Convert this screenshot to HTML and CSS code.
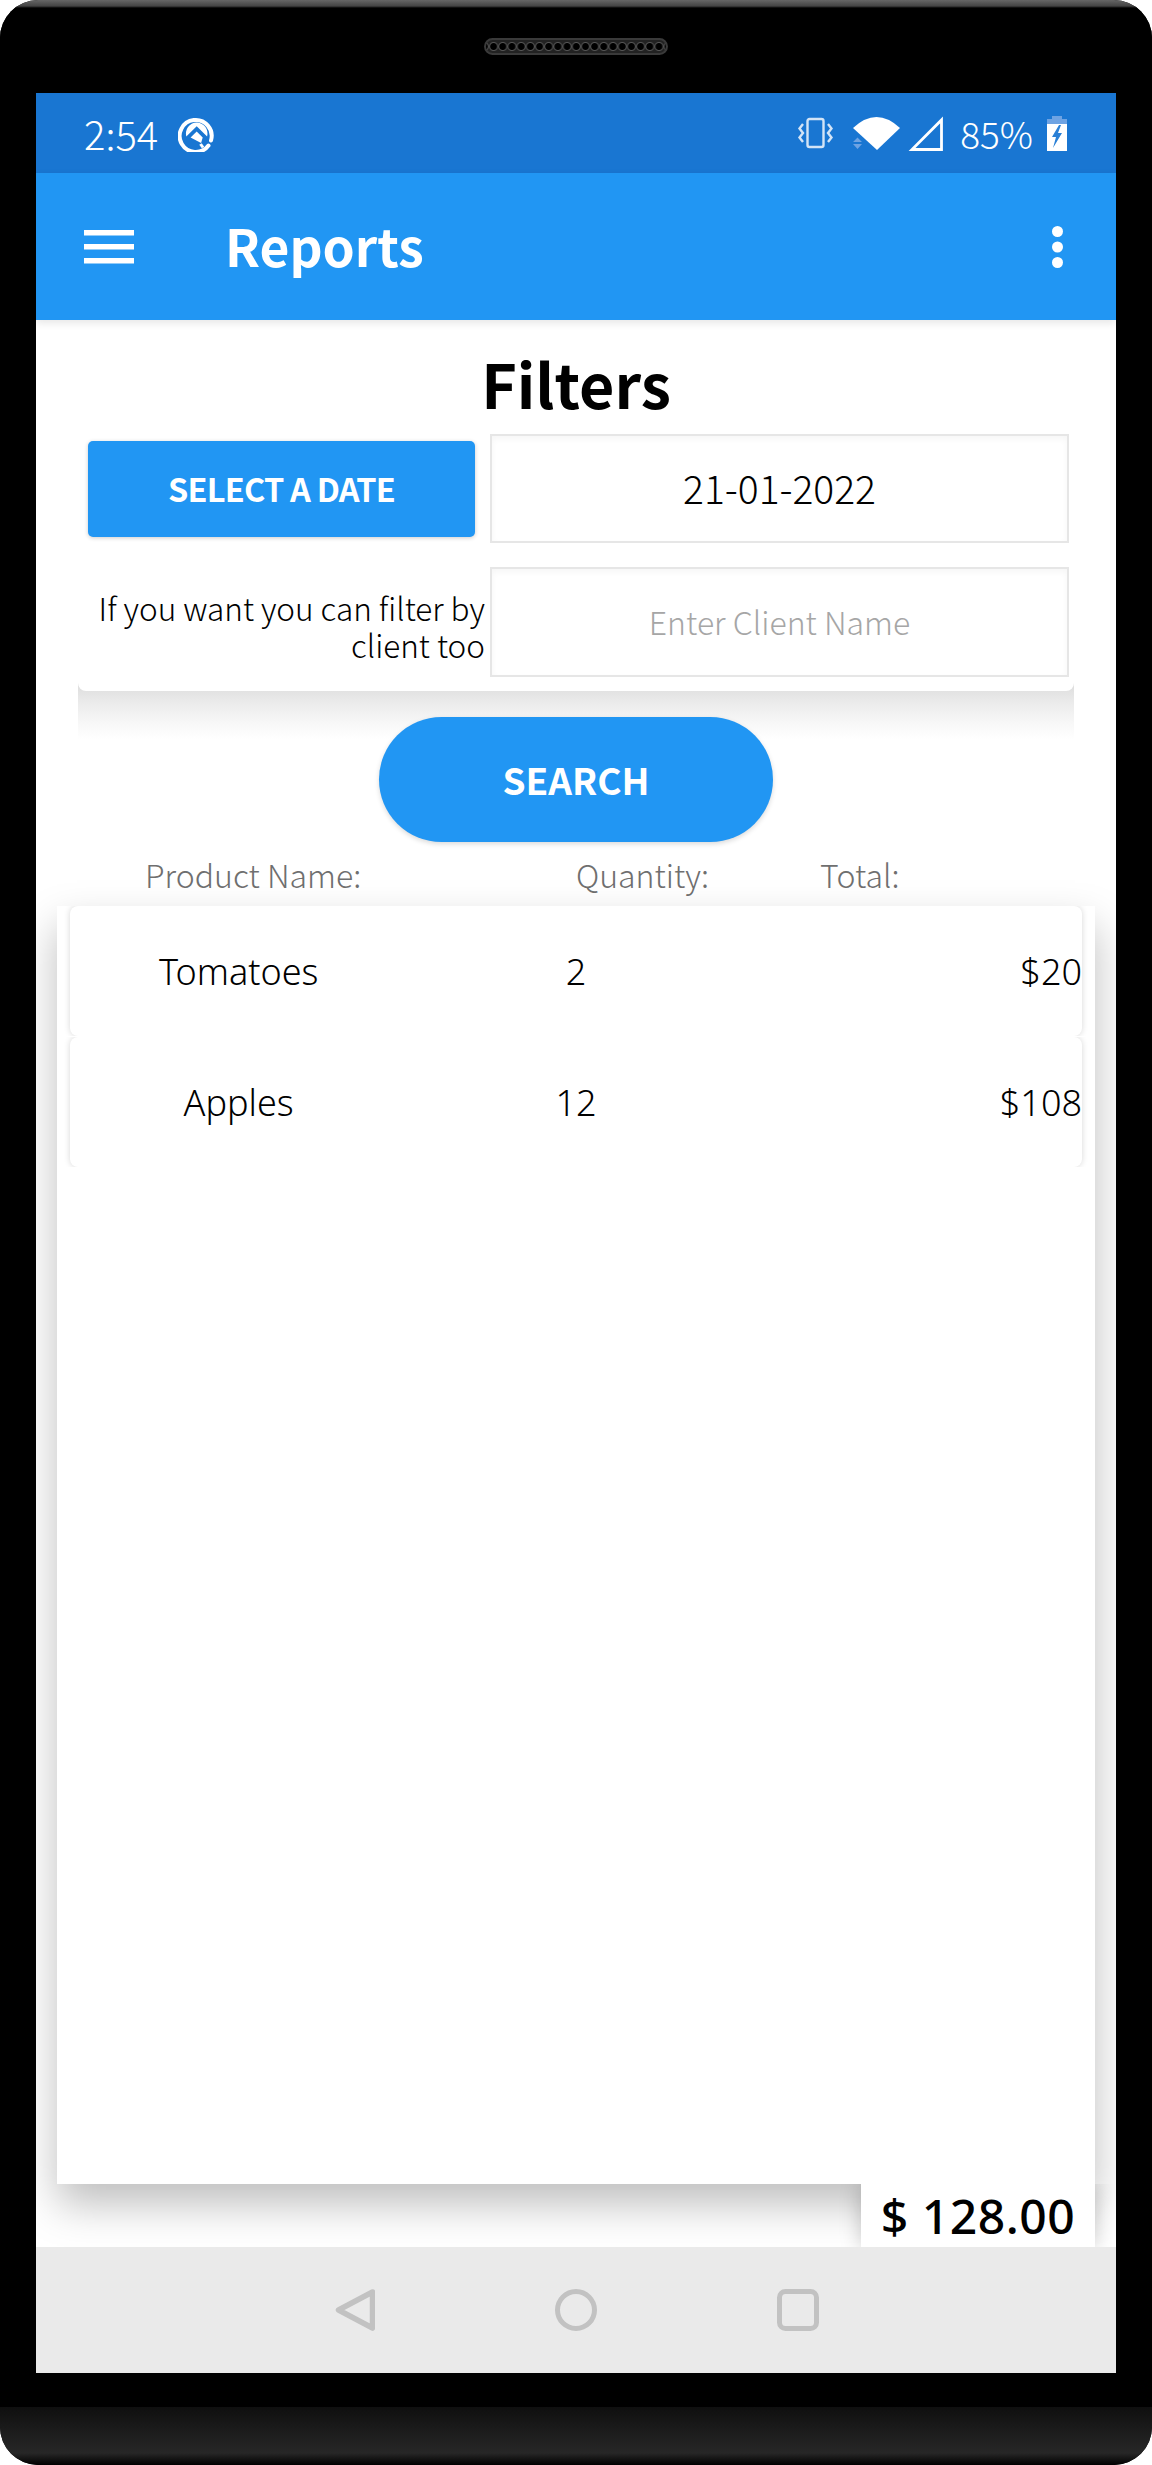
FILE: index.html
```html
<!DOCTYPE html>
<html lang="en">
<head>
    <meta charset="UTF-8">
    <meta name="viewport" content="width=device-width, initial-scale=1.0">
    <title>Reports</title>
    <link rel="stylesheet" href="styles.css">
</head>
<body>
    <div class="phone">
        <div class="bezel-top"><div class="speaker"></div></div>

        <div class="screen">
            <div class="status-bar">
                <span class="time">2:54</span>
                <svg class="q-icon" viewBox="0 0 37 37" width="37" height="37">
                    <path d="M30.5 30.5A16 16 0 1 1 33 25.5" fill="none" stroke="#fff" stroke-width="4" stroke-linecap="round"/>
                    <path d="M18.5 7.5a11 11 0 0 1 10.6 13.9L18.7 11.2 8.3 21.4A11 11 0 0 1 18.5 7.5z" fill="#fff"/>
                    <path d="M18.7 16.5l6 6-1.6 5.5-10.5-5.6z" fill="#fff"/>
                    <path d="M25 32.5l-2.500-3.500" stroke="#fff" stroke-width="3"/>
                </svg>
                <div class="status-right">
                    <svg class="vibrate-icon" viewBox="0 0 36 32" width="36" height="32">
                        <rect x="10.500" y="2" width="16" height="28" rx="2" fill="none" stroke="#d3e4f6" stroke-width="2.400"/>
                        <path d="M6 7L2.500 11.500 6 16 2.500 20.500 6 25" fill="none" stroke="#d3e4f6" stroke-width="2.400"/>
                        <path d="M31 7l3.500 4.500L31 16l3.500 4.500L31 25" fill="none" stroke="#d3e4f6" stroke-width="2.400"/>
                    </svg>
                    <svg class="wifi-icon" viewBox="0 0 47 33" width="47" height="33">
                        <path d="M0 11Q23.500-11 47 11L24 33z" fill="#fff"/>
                        <path d="M4.500 20.500l4.500 4.500H0zM0 27h9l-4.500 5z" fill="#6ea3e3"/>
                    </svg>
                    <svg class="signal-icon" viewBox="0 0 35 35" width="35" height="35">
                        <path d="M33.500 4V33.500H4z" fill="none" stroke="#fff" stroke-width="2.800"/>
                    </svg>
                    <span class="battery-text">85%</span>
                    <svg class="battery-icon" viewBox="0 0 20 35" width="20" height="35">
                        <path d="M5 0h10v3h5v5H0V3h5z" fill="#6ea3e3"/>
                        <path d="M0 8h20v27H0z" fill="#fff"/>
                        <path d="M12 9L5 21h4l-3 11 9-15h-4l3-8z" fill="#2a80d6"/>
                    </svg>
                </div>
            </div>

            <header class="app-bar">
                <svg class="menu-icon" viewBox="0 0 50 34" width="50" height="34">
                    <path d="M0 0h50v5.500H0zM0 14h50v5.500H0zM0 28h50v5.500H0z" fill="#fff"/>
                </svg>
                <h2 class="app-title">Reports</h2>
                <svg class="more-icon" viewBox="0 0 11 42" width="11" height="42">
                    <circle cx="5.500" cy="5.500" r="5.500" fill="#fff"/>
                    <circle cx="5.500" cy="21" r="5.500" fill="#fff"/>
                    <circle cx="5.500" cy="36.500" r="5.500" fill="#fff"/>
                </svg>
            </header>

            <main class="content">
                <section class="filter-card">
                    <h1 class="filter-title">Filters</h1>
                    <div class="filter-grid">
                        <button type="button" class="date-button">SELECT A DATE</button>
                        <div class="filter-box date-value">21-01-2022</div>
                        <label class="filter-hint" for="clientName">If you want you can filter by client too</label>
                        <input class="filter-box client-input" id="clientName" type="text" placeholder="Enter Client Name">
                    </div>
                </section>
                <div class="filter-shade"></div>

                <button type="button" class="search-button">SEARCH</button>

                <div class="table-head">
                    <span>Product Name:</span>
                    <span>Quantity:</span>
                    <span>Total:</span>
                </div>

                <div class="report-list">
                    <div class="report-row">
                        <span class="cell-name">Tomatoes</span>
                        <span class="cell-qty">2</span>
                        <span class="cell-total">$20</span>
                    </div>
                    <div class="report-row">
                        <span class="cell-name">Apples</span>
                        <span class="cell-qty">12</span>
                        <span class="cell-total">$108</span>
                    </div>
                </div>

                <div class="total-wrap">
                    <div class="total-box">$ 128.00</div>
                </div>
            </main>

            <nav class="nav-bar">
                <svg viewBox="0 0 42 42" width="42" height="42">
                    <path d="M39.500 3L5.500 21l34 18z" fill="none" stroke="#c2c2c2" stroke-width="5.500" stroke-linejoin="round"/>
                </svg>
                <svg viewBox="0 0 42 42" width="42" height="42">
                    <circle cx="21" cy="21" r="18.500" fill="none" stroke="#c2c2c2" stroke-width="5"/>
                </svg>
                <svg viewBox="0 0 42 42" width="42" height="42">
                    <rect x="2.500" y="2.500" width="37" height="37" rx="6" fill="none" stroke="#c2c2c2" stroke-width="5"/>
                </svg>
            </nav>
        </div>

        <div class="bezel-bottom"></div>
    </div>
</body>
</html>
```

FILE: styles.css
```css
* {
    box-sizing: border-box;
}
body {
    margin: 0;
    background-color: #fff;
    font-family: "Noto Sans CJK JP", "Noto Sans", sans-serif;
}
.phone {
    width: 1152px;
    height: 2465px;
    display: flex;
    flex-direction: column;
    background-color: #000;
    border-radius: 38px;
    overflow: hidden;
}

/* bezels */
.bezel-top {
    height: 93px;
    flex-shrink: 0;
    padding-top: 38px;
    display: flex;
    justify-content: center;
    background: linear-gradient(#666 0, #444 6px, #000 8px);
}
.speaker {
    width: 184px;
    height: 17px;
    border-radius: 9px;
    border: 2px solid #3a3a3a;
    background-color: #222;
    background-image: radial-gradient(circle at center, #000 0, #000 3px, #555 4px, #222 5px);
    background-size: 9.200px 13px;
    background-position: 3px center;
    background-repeat: repeat-x;
}
.bezel-bottom {
    height: 92px;
    flex-shrink: 0;
    background: linear-gradient(#000 0, #000 34px, #0f0f0f 34px, #272727 80px, #000 92px);
}

/* screen */
.screen {
    flex: 1;
    min-height: 0;
    margin: 0 36px;
    display: flex;
    flex-direction: column;
    background-color: #fff;
    overflow: hidden;
}
.status-bar {
    height: 80px;
    flex-shrink: 0;
    display: flex;
    align-items: center;
    padding: 0 49px 0 48px;
    background-color: #1976d2;
    color: #fff;
}
.time {
    font-size: 40px;
    font-weight: 300;
}
.q-icon {
    margin-left: 20px;
}
.status-right {
    margin-left: auto;
    display: flex;
    align-items: center;
}
.wifi-icon {
    margin-left: 20px;
}
.signal-icon {
    margin-left: 8px;
}
.battery-text {
    margin-left: 17px;
    font-size: 37px;
    font-weight: 300;
}
.battery-icon {
    margin-left: 14px;
}

.app-bar {
    height: 147px;
    flex-shrink: 0;
    display: flex;
    align-items: center;
    padding: 0 53px 0 48px;
    background-color: #2196f3;
    box-shadow: 0 3px 8px rgba(0, 0, 0, 0.1);
    position: relative;
    z-index: 3;
}
.app-title {
    margin: 0 0 5px 91px;
    color: #fff;
    font-size: 51.500px;
    font-weight: 700;
}
.more-icon {
    margin-left: auto;
}

/* filters */
.content {
    flex: 1;
    min-height: 0;
    display: flex;
    flex-direction: column;
}
.filter-card {
    height: 350px;
    flex-shrink: 0;
    margin: 21px 42px 0;
    padding-right: 5px;
    background-color: #fff;
    border-radius: 0 0 8px 8px;
    position: relative;
    z-index: 1;
}
.filter-title {
    margin: 0 0 5px;
    height: 88px;
    padding: 0 0 0 5px;
    line-height: 84px;
    text-align: center;
    font-size: 61px;
    font-weight: 700;
    color: #000;
}
.filter-grid {
    display: grid;
    grid-template-columns: 1fr 579px;
    grid-template-rows: 109px 110px;
    column-gap: 5px;
    row-gap: 24px;
}
.date-button {
    align-self: center;
    height: 96px;
    margin: 0 10px;
    padding: 0 0 2px;
    border: none;
    border-radius: 5px;
    background-color: #2196f3;
    color: #fff;
    font-family: inherit;
    font-size: 32.500px;
    font-weight: 700;
    letter-spacing: -0.800px;
    box-shadow: 0 1px 4px rgba(0, 0, 0, 0.2);
}
.filter-box {
    border: 2px solid #e6e6e6;
    background-color: #fff;
    box-shadow: inset 0 3px 6px rgba(0, 0, 0, 0.04);
    text-align: center;
    color: #000;
}
.date-value {
    display: flex;
    align-items: center;
    justify-content: center;
    padding-bottom: 4px;
    font-size: 39px;
    font-weight: 300;
}
.filter-hint {
    align-self: center;
    margin-top: 8px;
    text-align: right;
    font-size: 31.500px;
    font-weight: 300;
    line-height: 37px;
    color: #000;
}
.client-input {
    width: 100%;
    height: 100%;
    padding: 0 0 2px;
    font-family: inherit;
    font-size: 32px;
    font-weight: 300;
    outline: none;
}
.client-input::placeholder {
    color: #a6a6a6;
    opacity: 1;
}
.filter-shade {
    height: 56px;
    flex-shrink: 0;
    margin: -8px 42px -22px;
    background: linear-gradient(#dcdcdc, #ebebeb 35%, #f7f7f7 70%, #fff);
}

.search-button {
    width: 394px;
    height: 125px;
    flex-shrink: 0;
    align-self: center;
    padding: 0 0 2px;
    border: none;
    border-radius: 63px;
    background-color: #2196f3;
    color: #fff;
    font-family: inherit;
    font-size: 37px;
    font-weight: 700;
    box-shadow: 0 2px 5px rgba(0, 0, 0, 0.15);
    position: relative;
    z-index: 1;
}

/* table */
.table-head {
    height: 64px;
    flex-shrink: 0;
    display: grid;
    grid-template-columns: 431px 244px 1fr;
    align-items: center;
    padding: 0 0 0 109px;
    font-size: 32px;
    font-weight: 300;
    color: #6f6f6f;
}
.report-list {
    flex: 1;
    min-height: 0;
    margin: 0 21px;
    padding: 0 13px;
    display: flex;
    flex-direction: column;
    gap: 1px;
    background-color: #fff;
    box-shadow: 0 20px 40px rgba(0, 0, 0, 0.26);
    position: relative;
    z-index: 1;
}
.report-row {
    height: 130px;
    flex-shrink: 0;
    display: grid;
    grid-template-columns: repeat(3, 1fr);
    align-items: center;
    border-radius: 8px;
    background-color: #fff;
    box-shadow: 0 0 6px rgba(0, 0, 0, 0.16);
    clip-path: inset(0 -10px);
    font-family: "Noto Sans", sans-serif;
    font-size: 36px;
    font-weight: 300;
    color: #000;
}
.cell-name,
.cell-qty {
    text-align: center;
}
.cell-total {
    text-align: right;
}

.total-wrap {
    height: 63px;
    flex-shrink: 0;
    display: flex;
    justify-content: flex-end;
    padding: 0 21px 0 40px;
    overflow: hidden;
    position: relative;
    z-index: 2;
}
.total-box {
    width: 234px;
    display: flex;
    align-items: center;
    justify-content: center;
    background-color: #fff;
    box-shadow: 0 0 20px rgba(0, 0, 0, 0.22);
    color: #000;
    font-family: "Noto Sans", sans-serif;
    font-size: 48px;
    font-weight: 500;
    letter-spacing: 0.500px;
    line-height: 1;
}

.nav-bar {
    height: 126px;
    flex-shrink: 0;
    display: flex;
    align-items: center;
    justify-content: center;
    gap: 180px;
    background-color: #eaeaea;
    position: relative;
    z-index: 3;
}
```
